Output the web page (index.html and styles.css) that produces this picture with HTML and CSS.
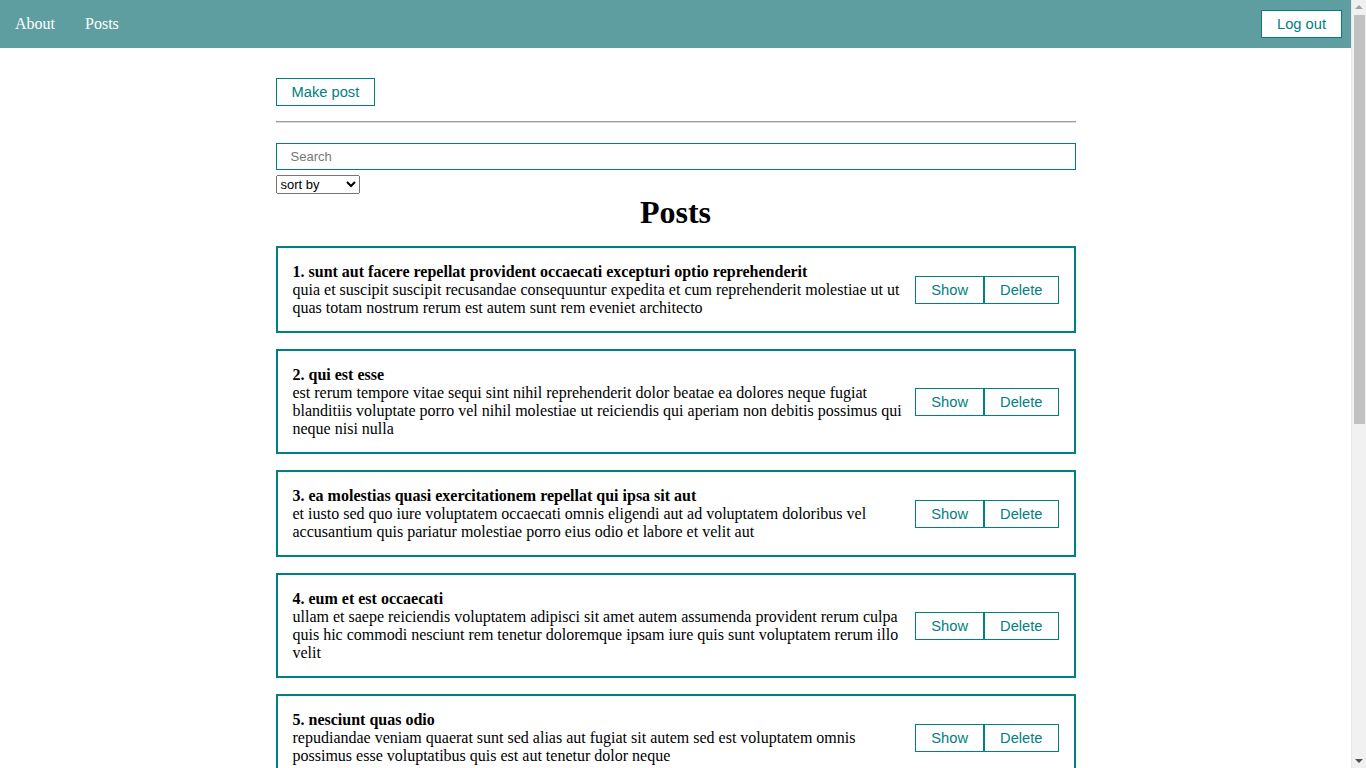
FILE: index.html
```html
<!DOCTYPE html>
<html lang="en">
<head>
<meta charset="utf-8">
<title>Posts</title>
<link rel="stylesheet" href="styles.css">
</head>
<body>
<nav class="navbar">
  <div class="navbar-links">
    <a class="nav-link" href="#">About</a>
    <a class="nav-link" href="#">Posts</a>
  </div>
  <button class="btn">Log out</button>
</nav>
<main class="app">
  <button class="btn">Make post</button>
  <hr class="divider">
  <input class="search" type="text" placeholder="Search">
  <div>
    <select class="sort">
      <option>sort by</option>
      <option>By title</option>
      <option>By body</option>
    </select>
  </div>
  <h1 class="title">Posts</h1>
  <div class="post-list">
    <div class="post">
      <div class="post-content">
        <strong>1. sunt aut facere repellat provident occaecati excepturi optio reprehenderit</strong>
        <div>quia et suscipit suscipit recusandae consequuntur expedita et cum reprehenderit molestiae ut ut quas totam nostrum rerum est autem sunt rem eveniet architecto</div>
      </div>
      <div class="post-btns"><button class="btn">Show</button><button class="btn">Delete</button></div>
    </div>
    <div class="post">
      <div class="post-content">
        <strong>2. qui est esse</strong>
        <div>est rerum tempore vitae sequi sint nihil reprehenderit dolor beatae ea dolores neque fugiat blanditiis voluptate porro vel nihil molestiae ut reiciendis qui aperiam non debitis possimus qui neque nisi nulla</div>
      </div>
      <div class="post-btns"><button class="btn">Show</button><button class="btn">Delete</button></div>
    </div>
    <div class="post">
      <div class="post-content">
        <strong>3. ea molestias quasi exercitationem repellat qui ipsa sit aut</strong>
        <div>et iusto sed quo iure voluptatem occaecati omnis eligendi aut ad voluptatem doloribus vel accusantium quis pariatur molestiae porro eius odio et labore et velit aut</div>
      </div>
      <div class="post-btns"><button class="btn">Show</button><button class="btn">Delete</button></div>
    </div>
    <div class="post">
      <div class="post-content">
        <strong>4. eum et est occaecati</strong>
        <div>ullam et saepe reiciendis voluptatem adipisci sit amet autem assumenda provident rerum culpa quis hic commodi nesciunt rem tenetur doloremque ipsam iure quis sunt voluptatem rerum illo velit</div>
      </div>
      <div class="post-btns"><button class="btn">Show</button><button class="btn">Delete</button></div>
    </div>
    <div class="post">
      <div class="post-content">
        <strong>5. nesciunt quas odio</strong>
        <div>repudiandae veniam quaerat sunt sed alias aut fugiat sit autem sed est voluptatem omnis possimus esse voluptatibus quis est aut tenetur dolor neque</div>
      </div>
      <div class="post-btns"><button class="btn">Show</button><button class="btn">Delete</button></div>
    </div>
    <div class="post">
      <div class="post-content">
        <strong>6. dolorem eum magni eos aperiam quia</strong>
        <div>ut aspernatur corporis harum nihil quis provident sequi mollitia nobis aliquid molestiae perspiciatis et ea nemo ab reprehenderit accusantium quas voluptate dolores velit et doloremque molestiae</div>
      </div>
      <div class="post-btns"><button class="btn">Show</button><button class="btn">Delete</button></div>
    </div>
    <div class="post">
      <div class="post-content">
        <strong>7. magnam facilis autem</strong>
        <div>dolore placeat quibusdam ea quo vitae magni quis enim qui quis quo nemo aut saepe quidem repellat excepturi ut quia sunt ut sequi eos ea sed quas</div>
      </div>
      <div class="post-btns"><button class="btn">Show</button><button class="btn">Delete</button></div>
    </div>
    <div class="post">
      <div class="post-content">
        <strong>8. dolorem dolore est ipsam</strong>
        <div>dignissimos aperiam dolorem qui eum facilis quibusdam animi sint suscipit qui sint possimus cum quaerat magni maiores excepturi ipsam ut commodi dolor voluptatum modi aut vitae</div>
      </div>
      <div class="post-btns"><button class="btn">Show</button><button class="btn">Delete</button></div>
    </div>
    <div class="post">
      <div class="post-content">
        <strong>9. nesciunt iure omnis dolorem tempora et accusantium</strong>
        <div>consectetur animi nesciunt iure dolore enim quia ad veniam autem ut quam aut nobis et est aut quod aut provident voluptas autem voluptas</div>
      </div>
      <div class="post-btns"><button class="btn">Show</button><button class="btn">Delete</button></div>
    </div>
    <div class="post">
      <div class="post-content">
        <strong>10. optio molestias id quia eum</strong>
        <div>quo et expedita modi cum officia vel magni doloribus qui repudiandae vero nisi sit quos veniam quod sed accusamus veritatis error</div>
      </div>
      <div class="post-btns"><button class="btn">Show</button><button class="btn">Delete</button></div>
    </div>
  </div>
</main>
<div class="fake-scrollbar" aria-hidden="true">
  <div class="sb-arrow sb-up"></div>
  <div class="sb-thumb"></div>
  <div class="sb-arrow sb-down"></div>
</div>
</body>
</html>
```
FILE: styles.css
```css
body {
  margin: 0 15px 0 0;
  font-family: "Liberation Serif", "Times New Roman", serif;
  font-size: 16px;
  color: #000;
  background: #fff;
}
.navbar {
  height: 48px;
  background: #5f9ea0;
  display: flex;
  align-items: center;
  justify-content: space-between;
  padding: 0 9px 1px 0;
  box-sizing: border-box;
}
.navbar-links {
  display: flex;
}
.nav-link {
  color: #fff;
  text-decoration: none;
  padding: 0 15px;
  font-size: 16px;
}
.btn {
  font-family: "Liberation Sans", Arial, sans-serif;
  font-size: 14.7px;
  line-height: 17px;
  padding: 5px 15px 4px;
  color: #008080;
  background: #fff;
  border: 1px solid #008080;
  cursor: pointer;
  margin: 0;
}
.app {
  width: 800px;
  margin: 30px auto 0;
}
.divider {
  margin: 15px 0 20px;
  border: none;
  border-top: 1px solid #999;
  border-bottom: 1px solid #ddd;
  height: 0;
}
.search {
  display: block;
  width: 100%;
  box-sizing: border-box;
  height: 27px;
  padding: 0 14px;
  border: 1px solid #008080;
  font-family: "Liberation Sans", Arial, sans-serif;
  font-size: 13px;
  margin: 0 0 5px;
  outline: none;
}
.search::placeholder {
  color: #777;
}
.sort {
  width: 84px;
  height: 19px;
  font-family: "Liberation Sans", Arial, sans-serif;
  font-size: 13px;
  margin: 0;
  display: block;
}
.title {
  text-align: center;
  font-size: 32px;
  margin: 0 0 15px;
  line-height: 37px;
}
.post-list {
  display: flex;
  flex-direction: column;
  gap: 16px;
}
.post {
  display: flex;
  align-items: center;
  justify-content: space-between;
  padding: 15px 15px 14px;
  border: 2px solid #008080;
  line-height: 18px;
}
.post-content {
  flex: 1;
  margin-right: 10px;
}
.post-btns {
  display: flex;
  flex-shrink: 0;
}
.fake-scrollbar {
  position: fixed;
  top: 0;
  right: 0;
  width: 15px;
  height: 100vh;
  background: #f1f1f1;
  border-left: 1px solid #e8e8e8;
  box-sizing: border-box;
}
.sb-thumb {
  position: absolute;
  top: 15px;
  left: 2px;
  width: 11px;
  height: 409px;
  background: #c1c1c1;
}
.sb-arrow {
  position: absolute;
  left: 3px;
  width: 0;
  height: 0;
  border-left: 4px solid transparent;
  border-right: 4px solid transparent;
}
.sb-up {
  top: 5px;
  border-bottom: 4px solid #a3a3a3;
}
.sb-down {
  bottom: 5px;
  border-top: 4px solid #505050;
}
```
